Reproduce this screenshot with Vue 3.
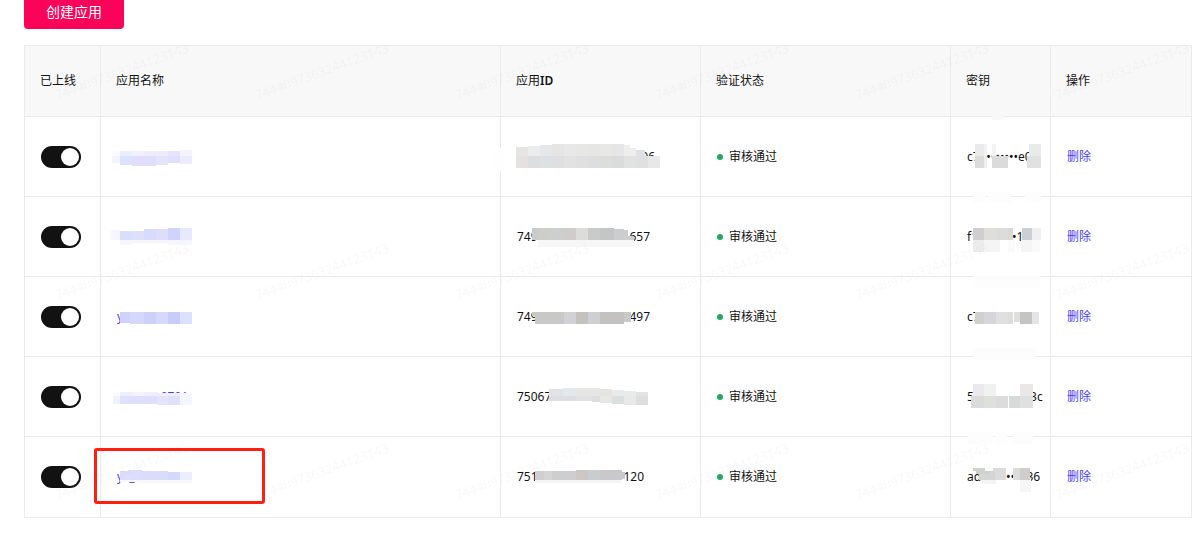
<script setup lang="js">
import {ref} from "vue";

// Every patch is [x, y, width, height, colour], measured from the corner of its cell
const apps = ref([
    {
        online: true,
        name: "",
        id: ["", "96"],
        secret: "c7a•••••••e0a",
        nameMask: [
            [11, 34, 8, 5, "#fafaff"], [19, 34, 12, 5, "#eaeffe"], [31, 34, 12, 5, "#f2f2fe"],
            [43, 34, 24, 5, "#ececfd"], [67, 34, 12, 5, "#e4e4fd"], [79, 33, 12, 6, "#f4f4fe"],
            [11, 39, 8, 7, "#f4f4ff"], [19, 39, 12, 9, "#dbe2fd"], [31, 39, 24, 10, "#e0defc"],
            [55, 39, 12, 9, "#e4e4fd"], [67, 39, 12, 7, "#e0e0fd"], [79, 39, 12, 8, "#ececfe"]
        ],
        idMask: [
            [-9, 31, 11, 23, "#fefefe"],
            [15, 30, 12, 9, "#e6e5e4"], [27, 29, 12, 10, "#ebedec"], [39, 28, 12, 11, "#e6e7ea"],
            [51, 27, 12, 12, "#e5e5e3"], [63, 27, 12, 12, "#e8e8e8"], [75, 27, 12, 12, "#e7e7e6"],
            [87, 27, 12, 12, "#e6e6e5"], [99, 27, 12, 12, "#e8e8e6"], [111, 27, 12, 12, "#e6e6e7"],
            [123, 28, 6, 11, "#eeeeec"], [129, 31, 6, 8, "#eeeeec"], [135, 33, 9, 6, "#dfe1e5"],
            [15, 39, 12, 12, "#e6e1e0"], [27, 39, 12, 12, "#dcdee0"], [39, 39, 12, 12, "#dce1e3"],
            [51, 39, 12, 12, "#dddfe0"], [63, 39, 12, 12, "#e2e2e0"], [75, 39, 12, 12, "#e0e0e1"],
            [87, 39, 12, 12, "#dddedf"], [99, 39, 12, 12, "#dcdedc"], [111, 39, 12, 12, "#dadbdd"],
            [123, 39, 12, 12, "#e1e3e2"], [135, 39, 12, 12, "#dfe1e1"], [147, 39, 12, 12, "#e8e8e8"]
        ],
        secretMask: [
            [41, -2, 12, 5, "#f8f8f8"],
            [24, 27, 9, 12, "#eaeaea"], [33, 27, 3, 12, "#f2f2f4"], [41, 27, 4, 12, "#f3f3f3"],
            [24, 39, 9, 12, "#dcdcdc"], [33, 39, 3, 12, "#eeeeee"], [41, 39, 16, 12, "#dbdbdb"],
            [78, 27, 12, 12, "#e9ebea"], [76, 39, 14, 12, "#e1e1e1"]
        ]
    },
    {
        online: true,
        name: "",
        id: ["749", "657"],
        secret: "f16•••••••1b",
        nameMask: [
            [10, 33, 9, 10, "#f6f6ff"], [19, 34, 12, 9, "#d9defc"], [31, 34, 12, 9, "#dddffb"],
            [43, 32, 12, 11, "#d8dbfc"], [55, 32, 12, 11, "#dedefc"], [67, 31, 12, 12, "#d0d3fb"],
            [79, 31, 12, 12, "#e9e9fe"], [19, 43, 12, 5, "#f6f6fe"], [31, 43, 36, 3, "#f6f6fe"],
            [67, 43, 24, 5, "#f6f6fe"]
        ],
        idMask: [
            [31, 31, 6, 12, "#c9ccce"], [37, 31, 12, 12, "#cdcdc9"], [49, 31, 14, 12, "#cccfcd"],
            [63, 31, 12, 12, "#d0cccb"], [75, 31, 12, 12, "#dcdcdb"], [87, 31, 12, 12, "#cacaca"],
            [99, 31, 14, 12, "#c4c5c5"], [113, 32, 10, 11, "#cccdcf"], [123, 33, 4, 10, "#cccdcf"],
            [127, 39, 6, 4, "#cccdcf"], [37, 43, 96, 7, "#f7f7f7"]
        ],
        secretMask: [
            [23, -5, 12, 11, "#fdfdfd"], [37, -5, 23, 11, "#fdfdfd"], [74, -5, 16, 11, "#fdfdfd"],
            [22, 31, 11, 12, "#cfcfd1"], [33, 31, 13, 12, "#e0dedb"], [46, 31, 11, 12, "#dcdcdc"],
            [57, 31, 5, 12, "#d9dad5"], [71, 31, 10, 12, "#ccd0d4"], [81, 31, 9, 12, "#f0f0f0"],
            [22, 43, 11, 12, "#ececec"], [33, 43, 16, 12, "#f5f5f5"], [57, 43, 7, 12, "#fafafa"],
            [70, 43, 11, 12, "#f5f5f5"], [81, 43, 8, 12, "#fafafa"]
        ]
    },
    {
        online: true,
        name: "y",
        id: ["749", "497"],
        secret: "c7",
        nameMask: [
            [19, 35, 12, 11, "#cfd3fb"], [29, 35, 14, 12, "#d5d8fc"], [43, 35, 12, 12, "#ccd0fb"],
            [55, 35, 12, 12, "#d6d9fc"], [67, 35, 12, 12, "#c8ccfb"], [79, 35, 12, 12, "#dde0fe"]
        ],
        idMask: [
            [31, 35, 4, 4, "#c6c9c7"], [34, 35, 13, 12, "#c6c9c7"], [47, 35, 16, 12, "#cac8c6"],
            [63, 35, 12, 12, "#d0d2d5"], [75, 35, 12, 12, "#c5c1bd"], [87, 35, 12, 12, "#ccd0d3"],
            [99, 35, 24, 12, "#c4c2c0"], [123, 35, 7, 10, "#c8c9c8"]
        ],
        secretMask: [
            [23, -1, 66, 12, "#fdfdfd"],
            [24, 35, 9, 12, "#d0d0cf"], [33, 35, 12, 12, "#d4d6db"], [45, 35, 12, 12, "#dfe0df"],
            [57, 35, 5, 12, "#dddddb"], [63, 35, 6, 10, "#dededc"], [69, 35, 12, 12, "#c4c4c2"],
            [81, 35, 7, 12, "#e3e5e9"]
        ]
    },
    {
        online: true,
        name: "              0701",
        id: ["75067", ""],
        secret: "5                  3c",
        nameMask: [
            [12, 35, 7, 4, "#fafaff"], [19, 35, 12, 4, "#eeeeff"], [31, 35, 12, 4, "#f3f3ff"],
            [43, 35, 14, 4, "#eeeefe"], [57, 36, 22, 3, "#eeeefe"],
            [12, 39, 7, 8, "#f2f2fe"], [19, 39, 12, 8, "#dee1fd"], [31, 39, 25, 8, "#dfdffd"],
            [56, 39, 11, 9, "#e6e4fd"], [67, 39, 12, 9, "#e0e2fb"], [79, 36, 12, 12, "#f5f5ff"]
        ],
        idMask: [
            [48, 32, 14, 7, "#e2e3e6"], [62, 31, 13, 8, "#e3e8ea"], [75, 31, 24, 8, "#e6e6e5"],
            [99, 32, 12, 7, "#e4e4e3"], [111, 33, 12, 6, "#e7ebea"], [123, 34, 12, 5, "#e9ebea"],
            [135, 35, 12, 4, "#e2e3e3"],
            [48, 39, 14, 5, "#dedee2"], [62, 39, 13, 5, "#dcdee0"], [75, 39, 16, 5, "#e2e2e4"],
            [91, 39, 8, 6, "#dfdfe1"], [99, 39, 12, 7, "#e8e8e3"], [111, 39, 12, 8, "#dbe0df"],
            [123, 39, 12, 9, "#e7e8e8"], [135, 39, 12, 9, "#dededf"]
        ],
        secretMask: [
            [23, -9, 62, 12, "#fdfdfd"],
            [22, 27, 11, 12, "#ebe9ec"], [33, 27, 12, 12, "#f0f2f1"], [69, 27, 13, 12, "#ebe7e8"],
            [20, 39, 13, 12, "#dadcdb"], [33, 39, 12, 12, "#dee0db"], [45, 39, 12, 12, "#dcdcdc"],
            [58, 39, 11, 12, "#d8dad9"], [69, 39, 13, 12, "#dfe1e0"]
        ]
    },
    {
        online: true,
        name: "y  _",
        id: ["751", "120"],
        secret: "ad0•••••••836",
        marked: true,
        nameMask: [
            [19, 34, 8, 9, "#dcdcfb"], [27, 33, 14, 10, "#dcdcfd"], [41, 34, 26, 9, "#dadcfc"],
            [67, 35, 12, 8, "#d5d8fd"], [79, 35, 12, 8, "#eceefe"], [37, 43, 54, 3, "#f7f7fe"],
            [19, 43, 18, 2, "#f7f7fe"]
        ],
        idMask: [
            [34, 34, 9, 9, "#cfcfcf"], [43, 34, 8, 9, "#d5d5d3"], [51, 34, 12, 9, "#cccfcd"],
            [63, 34, 12, 9, "#d0cdd0"], [75, 33, 12, 10, "#ccc9c5"], [87, 33, 12, 10, "#cacdcf"],
            [99, 33, 22, 10, "#c9c9cb"], [121, 35, 3, 7, "#c9c9cb"], [34, 43, 86, 3, "#f5f5f5"]
        ],
        secretMask: [
            [17, -5, 25, 12, "#fdfdfd"], [44, -5, 12, 12, "#fdfdfd"], [62, -5, 20, 12, "#fdfdfd"],
            [22, 31, 12, 3, "#cfd1cf"], [42, 31, 4, 3, "#dcdcdc"], [25, 34, 14, 3, "#cfd1cf"],
            [39, 34, 6, 3, "#d4d5d6"], [28, 37, 17, 6, "#d4d5d6"],
            [44, 31, 11, 12, "#dcdcdc"], [62, 31, 7, 12, "#dcdcdf"], [69, 31, 10, 12, "#d0cecd"],
            [31, 43, 14, 4, "#f4f4f4"], [69, 43, 11, 12, "#f6f6f6"]
        ]
    }
]);

function removeApp(index) {
    apps.value.splice(index, 1);
}
</script>

<template>
    <main class="page">
        <button type="button" class="create-button">创建应用</button>
        <table class="apps">
            <colgroup>
                <col class="col-online">
                <col class="col-name">
                <col class="col-id">
                <col class="col-status">
                <col class="col-secret">
                <col>
            </colgroup>
            <thead>
                <tr>
                    <th>已上线</th>
                    <th>应用名称</th>
                    <th>应用<b>ID</b></th>
                    <th>验证状态</th>
                    <th>密钥</th>
                    <th>操作</th>
                </tr>
            </thead>
            <tbody>
                <tr v-for="(app, index) in apps">
                    <td><input v-model="app.online" type="checkbox" class="switch" aria-label="已上线"></td>
                    <td>
                        <a href="#" class="link" @click.prevent>{{ app.name }}</a>
                        <svg class="mask" aria-hidden="true">
                            <rect v-for="p in app.nameMask" :x="p[0]" :y="p[1]" :width="p[2]" :height="p[3]" :fill="p[4]"/>
                        </svg>
                        <div v-if="app.marked" class="marker"></div>
                    </td>
                    <td>
                        <div class="app-id"><span>{{ app.id[0] }}</span><span>{{ app.id[1] }}</span></div>
                        <svg class="mask" aria-hidden="true">
                            <rect v-for="p in app.idMask" :x="p[0]" :y="p[1]" :width="p[2]" :height="p[3]" :fill="p[4]"/>
                        </svg>
                    </td>
                    <td><div class="status">审核通过</div></td>
                    <td>
                        <span class="secret">{{ app.secret }}</span>
                        <svg class="mask" aria-hidden="true">
                            <rect v-for="p in app.secretMask" :x="p[0]" :y="p[1]" :width="p[2]" :height="p[3]" :fill="p[4]"/>
                        </svg>
                    </td>
                    <td><a href="#" class="link" @click.prevent="removeApp(index)">删除</a></td>
                </tr>
            </tbody>
        </table>
        <svg class="watermark" aria-hidden="true">
            <defs>
                <pattern id="watermark-tile" width="200" height="200" patternUnits="userSpaceOnUse">
                    <text transform="translate(33 100) rotate(-20)">7444097363244123143</text>
                </pattern>
            </defs>
            <rect width="100%" height="100%" fill="url(#watermark-tile)"/>
        </svg>
    </main>
</template>

<style>
body {
    margin: 0;
    background-color: white;
}
</style>

<style scoped>
.page {
    padding: 0 7px 20px 24px;
    position: relative;
    font-family: "Noto Sans", "Noto Sans CJK SC", sans-serif;
    font-size: 12px;
    line-height: 20px;
    color: #121212;
}

.create-button {
    display: block;
    margin-bottom: 16px;
    padding: 2px 22px 7px;
    border: none;
    border-radius: 0 0 4px 4px;
    background-color: #fb0359;
    color: white;
    font-family: inherit;
    font-size: 14px;
    line-height: 20px;
}

.apps {
    width: 100%;
    table-layout: fixed;
    border-collapse: separate;
    border-spacing: 0;
    border-top: 1px solid #ebebeb;
    border-left: 1px solid #ebebeb;
}

.col-online {
    width: 76px;
}

.col-name {
    width: 400px;
}

.col-id {
    width: 200px;
}

.col-status {
    width: 250px;
}

.col-secret {
    width: 100px;
}

th, td {
    box-sizing: border-box;
    border-right: 1px solid #ebebeb;
    border-bottom: 1px solid #ebebeb;
    text-align: left;
    vertical-align: middle;
}

th {
    height: 71px;
    padding: 0 15px;
    background-color: #f8f8f8;
    font-weight: normal;
}

th b {
    font-weight: 600;
}

td {
    position: relative;
    height: 80px;
    padding: 0 0 0 16px;
}

tr:last-child td {
    height: 81px;
}

.switch {
    display: block;
    appearance: none;
    box-sizing: border-box;
    width: 40px;
    height: 22px;
    margin: 0;
    padding: 2px;
    border-radius: 11px;
    background-color: #c8c8c8;
}

.switch::before {
    content: "";
    display: block;
    width: 18px;
    height: 18px;
    border-radius: 50%;
    background-color: white;
}

.switch:checked {
    background-color: #121212;
}

.switch:checked::before {
    margin-left: auto;
}

.link {
    color: #4a3cf0;
    text-decoration: none;
    white-space: pre;
}

.app-id {
    display: flex;
    justify-content: space-between;
    width: 133px;
}

tr:first-child .app-id {
    width: 138px;
}

tr:last-child .app-id {
    width: 127px;
}

.status {
    display: flex;
    align-items: center;
    gap: 6px;
}

.status::before {
    content: "";
    width: 6px;
    height: 6px;
    border-radius: 50%;
    background-color: #26a766;
}

.secret {
    white-space: pre;
}

.mask {
    position: absolute;
    top: 0;
    left: 0;
    width: 100%;
    height: 100%;
    overflow: visible;
    shape-rendering: crispEdges;
    pointer-events: none;
}

.marker {
    position: absolute;
    top: 11px;
    left: -7px;
    box-sizing: border-box;
    width: 171px;
    height: 56px;
    border: 3px solid #ff1e12;
    border-radius: 3px;
    z-index: 1;
}

.watermark {
    position: absolute;
    top: 0;
    left: 24px;
    width: calc(100% - 24px);
    height: 100%;
    pointer-events: none;
}

.watermark text {
    font-family: "Noto Sans", sans-serif;
    font-size: 13px;
    fill: #888888;
    opacity: 0.05;
}
</style>
